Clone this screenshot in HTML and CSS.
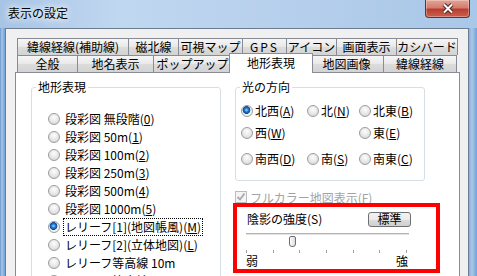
FILE: index.html
```html
<!DOCTYPE html>
<html lang="ja">
<head>
  <meta charset="UTF-8">
  <title>表示の設定</title>
  <link rel="stylesheet" href="styles.css">
</head>
<body>
  <div class="window">
    <div class="titlebar">
      <span class="title">表示の設定</span>
      <div class="close-btn">
        <svg width="12" height="11" viewBox="0 0 12 11">
          <path d="M2 1.5 L10 9.5 M10 1.5 L2 9.5" stroke="#4f2520" stroke-width="4" fill="none"/>
          <path d="M2 1.5 L10 9.5 M10 1.5 L2 9.5" stroke="#fff" stroke-width="2" fill="none"/>
        </svg>
      </div>
    </div>

    <div class="client">
      <!-- back row of tabs -->
      <div class="tab-row">
        <div class="tab tab-aux">緯線経線(補助線)</div>
        <div class="tab tab-north">磁北線</div>
        <div class="tab tab-visible">可視マップ</div>
        <div class="tab tab-gps">GPS</div>
        <div class="tab tab-icon">アイコン</div>
        <div class="tab tab-screen">画面表示</div>
        <div class="tab tab-bird">カシバード</div>
      </div>
      <!-- front row of tabs -->
      <div class="tab-row">
        <div class="tab tab-general">全般</div>
        <div class="tab tab-names">地名表示</div>
        <div class="tab tab-popup">ポップアップ</div>
        <div class="tab tab-terrain active">地形表現</div>
        <div class="tab tab-image">地図画像</div>
        <div class="tab tab-grid">緯線経線</div>
      </div>

      <div class="panel">
        <fieldset class="group group-terrain">
          <legend>地形表現</legend>
          <div class="terrain-list">
            <div class="radio-row"><span class="radio"></span><span class="opt">段彩図 無段階(<u>0</u>)</span></div>
            <div class="radio-row"><span class="radio"></span><span class="opt">段彩図 50m(<u>1</u>)</span></div>
            <div class="radio-row"><span class="radio"></span><span class="opt">段彩図 100m(<u>2</u>)</span></div>
            <div class="radio-row"><span class="radio"></span><span class="opt">段彩図 250m(<u>3</u>)</span></div>
            <div class="radio-row"><span class="radio"></span><span class="opt">段彩図 500m(<u>4</u>)</span></div>
            <div class="radio-row"><span class="radio"></span><span class="opt">段彩図 1000m(<u>5</u>)</span></div>
            <div class="radio-row"><span class="radio on"></span><span class="opt focus">レリーフ[1](地図帳風)(<u>M</u>)</span></div>
            <div class="radio-row"><span class="radio"></span><span class="opt">レリーフ[2](立体地図)(<u>L</u>)</span></div>
            <div class="radio-row"><span class="radio"></span><span class="opt">レリーフ等高線 10m</span></div>
            <div class="radio-row"><span class="radio"></span><span class="opt">レリーフ等高線 20m</span></div>
          </div>
        </fieldset>

        <div class="right-col">
          <fieldset class="group group-light">
            <legend>光の方向</legend>
            <div class="dir-grid">
              <div class="radio-row"><span class="radio on"></span><span class="opt">北西(<u>A</u>)</span></div>
              <div class="radio-row"><span class="radio"></span><span class="opt">北(<u>N</u>)</span></div>
              <div class="radio-row"><span class="radio"></span><span class="opt">北東(<u>B</u>)</span></div>
              <div class="radio-row"><span class="radio"></span><span class="opt">西(<u>W</u>)</span></div>
              <div></div>
              <div class="radio-row"><span class="radio"></span><span class="opt">東(<u>E</u>)</span></div>
              <div class="radio-row"><span class="radio"></span><span class="opt">南西(<u>D</u>)</span></div>
              <div class="radio-row"><span class="radio"></span><span class="opt">南(<u>S</u>)</span></div>
              <div class="radio-row"><span class="radio"></span><span class="opt">南東(<u>C</u>)</span></div>
            </div>
          </fieldset>

          <div class="check-row">
            <span class="checkbox">
              <svg width="10" height="10" viewBox="0 0 10 10"><path d="M1.5 5 L4 7.5 L8.5 1.5" stroke="#a8a8a8" stroke-width="1.8" fill="none"/></svg>
            </span>
            <span class="check-label">フルカラー地図表示(<u>F</u>)</span>
          </div>

          <!-- highlighted shading box -->
          <div class="shade-box">
            <div class="shade-head">
              <span>陰影の強度(S)</span>
              <button class="std-btn">標準</button>
            </div>
            <div class="slider">
              <div class="track"></div>
              <div class="thumb"></div>
            </div>
            <div class="ticks">
              <span></span><span></span><span></span><span></span><span></span><span></span><span></span>
            </div>
            <div class="scale">
              <span>弱</span>
              <span>強</span>
            </div>
          </div>
        </div>
      </div>
    </div>
  </div>
</body>
</html>
```

FILE: styles.css
```css
/* Global */
* {
  margin: 0;
  padding: 0;
  box-sizing: border-box;
}

body {
  width: 477px;
  height: 276px;
  overflow: hidden;
  font-family: "Noto Sans CJK JP", "Noto Sans", sans-serif;
  font-size: 12px;
  color: #000;
  background: #84acdc;
}

u {
  text-underline-offset: 1px;
}

/* Window frame */
.window {
  height: 276px;
  display: flex;
  flex-direction: column;
  background: linear-gradient(to right, #6a96ce 0, #a9c8ea 2px, #7ea7d8 4px, #86aedd 469px, #a9c8ea 472px, #769fd3 477px);
}

.titlebar {
  height: 28px;
  flex: none;
  display: flex;
  justify-content: space-between;
  align-items: flex-start;
  padding-left: 8px;
  background: linear-gradient(to right, #a7c4e5, #c0d7f0 25%, #b6cfec 60%, #a9c7e8);
}

.title {
  line-height: 26px;
  text-shadow: 0 0 6px #fff, 0 0 10px #fff;
}

.close-btn {
  width: 45px;
  height: 18px;
  margin-right: 7px;
  border: 1px solid #6b2f28;
  border-top: none;
  border-radius: 0 0 4px 4px;
  background: linear-gradient(#e4a597, #d27d6f 45%, #bd3d2f 55%, #c9604f);
  box-shadow: inset 0 0 0 1px rgba(255, 255, 255, 0.3);
  display: flex;
  align-items: center;
  justify-content: center;
}

/* Client area */
.client {
  flex: 1;
  margin: 0 8px 0 5px;
  border: 1px solid #6d7c8e;
  border-bottom: none;
  background: #f0f0f0;
  padding: 9px 8px 0 9px;
  overflow: hidden;
  display: flex;
  flex-direction: column;
}

/* Tabs */
.tab-row {
  display: flex;
  align-items: flex-start;
  height: 17px;
  padding-left: 2px;
  flex: none;
}

.tab {
  height: 17px;
  border: 1px solid #898c95;
  border-bottom: none;
  margin-left: -1px;
  background: linear-gradient(#f6f6f6, #e8e8e8 50%, #dcdcdc 52%, #d3d3d3);
  text-align: center;
  line-height: 15px;
  white-space: nowrap;
}

.tab:first-child {
  margin-left: 0;
}

.tab-aux { width: 112px; }
.tab-north { width: 51px; }
.tab-visible { width: 65px; }
.tab-gps { width: 45px; letter-spacing: 2px; }
.tab-icon { width: 51px; }
.tab-screen { width: 61px; }
.tab-bird { width: 62px; }

.tab-general { width: 61px; }
.tab-names { width: 77px; }
.tab-popup { width: 79px; }
.tab-image { width: 75px; }
.tab-grid { width: 74px; }

.tab.active {
  width: 84px;
  height: 20px;
  margin: -2px -3px -1px -3px;
  padding-top: 1px;
  background: #fff;
  position: relative;
  z-index: 1;
}

/* Tab page */
.panel {
  flex: none;
  height: 240px;
  border: 1px solid #898c95;
  background: #fff;
  display: flex;
  align-items: flex-start;
  gap: 14px;
  padding: 6px 0 0 15px;
}

.group {
  width: 190px;
  border: 1px solid #d5dfe5;
  border-radius: 3px;
  padding: 0;
  min-width: 0;
}

.group legend {
  margin-left: 4px;
  padding: 0 2px;
  line-height: 16px;
}

.group-terrain {
  height: 230px;
}

.terrain-list {
  padding: 15px 0 0 16px;
}

.radio-row {
  display: flex;
  align-items: center;
  height: 18px;
  white-space: nowrap;
}

.radio {
  width: 12px;
  height: 12px;
  flex: none;
  border-radius: 50%;
  border: 1px solid #9c9c9c;
  background: radial-gradient(circle at 50% 35%, #fdfdfd 0, #e6e6e6 55%, #cfcfcf 100%);
}

.radio.on {
  background: radial-gradient(circle at 45% 40%, #b5e2ff 0, #2d8be0 1.5px, #0b4595 3.6px, #f6f6f6 4.2px, #e4e4e4 100%);
}

.opt {
  margin-left: 3px;
  border: 1px dotted transparent;
  padding: 0 1px;
  line-height: 16px;
}

.opt.focus {
  border-color: #000;
}

/* Light direction */
.right-col {
  width: 190px;
  display: flex;
  flex-direction: column;
}

.dir-grid {
  display: grid;
  grid-template-columns: 66px 52px 1fr;
  grid-template-rows: 18px 18px 22px;
  row-gap: 4px;
  align-items: end;
  padding: 7px 0 12px 5px;
}

.dir-grid .opt {
  margin-left: 0;
}

.check-row {
  display: flex;
  align-items: center;
  height: 16px;
  margin-top: 8px;
  color: #a3a3a3;
  white-space: nowrap;
}

.checkbox {
  width: 12px;
  height: 12px;
  border: 1px solid #bcbcbc;
  background: #f4f4f4;
  display: flex;
  align-items: center;
  justify-content: center;
}

.check-label {
  margin-left: 3px;
}

/* Shading strength (marked in red) */
.shade-box {
  width: 207px;
  height: 70px;
  margin: -2px 0 0 -2px;
  border: 4px solid #f00;
  padding: 4px 25px 0 10px;
}

.shade-head {
  display: flex;
  justify-content: space-between;
  align-items: center;
  height: 16px;
  line-height: 16px;
}

.std-btn {
  width: 43px;
  height: 15px;
  border: 1px solid #707070;
  border-radius: 3px;
  background: linear-gradient(#f2f2f2, #ebebeb 50%, #dddddd 52%, #cfcfcf);
  font: inherit;
  line-height: 12px;
  color: #000;
}

.slider {
  position: relative;
  width: 163px;
  height: 14px;
  margin: 2px 0 0 -1px;
}

.track {
  height: 2px;
  margin-top: 6px;
  border-top: 1px solid #b4b4b4;
  background: #e2e2e2;
}

.thumb {
  position: absolute;
  left: 43px;
  top: 3px;
  width: 7px;
  height: 11px;
  border: 1px solid #6f6f6f;
  border-radius: 2px 2px 3px 3px;
  background: linear-gradient(to right, #fdfdfd, #dcdcdc);
}

.ticks {
  display: flex;
  justify-content: space-between;
  width: 161px;
  height: 3px;
  margin: 3px 0 0 -1px;
}

.ticks span {
  width: 1px;
  height: 3px;
  background: #a0a0a0;
}

.scale {
  display: flex;
  justify-content: space-between;
  width: 162px;
  margin-left: -1px;
  line-height: 16px;
}
```
